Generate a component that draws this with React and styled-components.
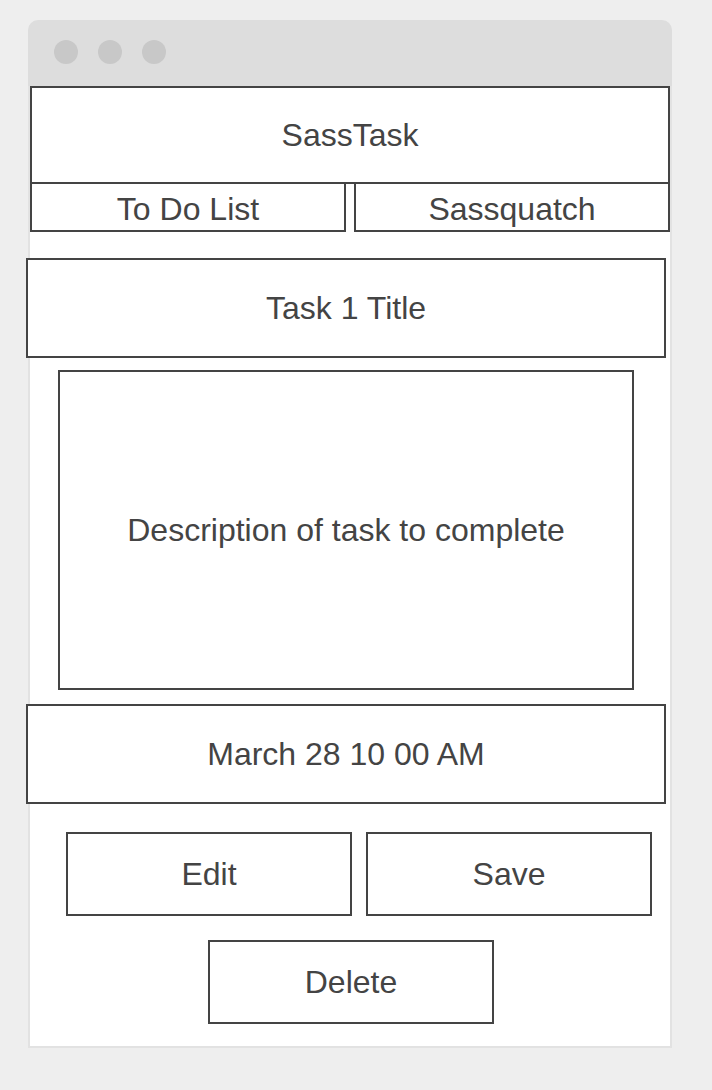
import styled, { createGlobalStyle } from "styled-components";

const GlobalStyle = createGlobalStyle`
    body {
        margin: 0;
        background: #eeeeee;
        font-family: "Liberation Sans", Arial, sans-serif;
        color: #444444;
    }
`;

const Window = styled.div`
    width: 644px;
    margin: 20px 0 42px 28px;
`;
const TitleBar = styled.div`
    height: 66px;
    background: #dddddd;
    border-radius: 10px 10px 0 0;
    display: flex;
    gap: 20px;
    padding: 20px 0 0 26px;
    box-sizing: border-box;
`;
const Dot = styled.span`
    width: 24px;
    height: 24px;
    border-radius: 50%;
    background: #c8c8c8;
`;
const Body = styled.div`
    background: #fff;
    border: 2px solid #e2e2e2;
    border-top: none;
    padding-bottom: 22px;
`;
const Box = styled.div`
    box-sizing: border-box;
    border: 2px solid #444444;
    display: flex;
    align-items: center;
    justify-content: center;
    font-size: 32px;
    color: #444444;
    background: #fff;
`;
const Header = styled(Box)`
    width: 640px;
    height: 98px;
`;
const Tabs = styled.nav`
    display: flex;
    gap: 8px;
    margin-top: -2px;
`;
const Tab = styled(Box)`
    width: 316px;
    height: 50px;
    padding-top: 4px;
`;
const WideField = styled(Box)`
    width: 640px;
    height: 100px;
    margin: ${(p) => p.$top}px 0 0 -4px;
`;
const Description = styled(Box)`
    width: 576px;
    height: 320px;
    margin: 12px 0 0 28px;
`;
const ButtonRow = styled.div`
    display: flex;
    gap: 14px;
    margin: 28px 0 0 36px;
`;
const Button = styled(Box)`
    width: 286px;
    height: 84px;
    margin-left: ${(p) => p.$left || 0}px;
`;
const DeleteRow = styled.div`
    margin-top: 24px;
`;

const App = () => {
    return (
        <>
            <GlobalStyle />
            <Window>
                <TitleBar>
                    <Dot />
                    <Dot />
                    <Dot />
                </TitleBar>
                <Body>
                    <Header>SassTask</Header>
                    <Tabs>
                        <Tab>To Do List</Tab>
                        <Tab>Sassquatch</Tab>
                    </Tabs>
                    <WideField $top={26}>Task 1 Title</WideField>
                    <Description>Description of task to complete</Description>
                    <WideField $top={14}>March 28 10 00 AM</WideField>
                    <ButtonRow>
                        <Button>Edit</Button>
                        <Button>Save</Button>
                    </ButtonRow>
                    <DeleteRow>
                        <Button $left={178}>Delete</Button>
                    </DeleteRow>
                </Body>
            </Window>
        </>
    );
};

export default App;
